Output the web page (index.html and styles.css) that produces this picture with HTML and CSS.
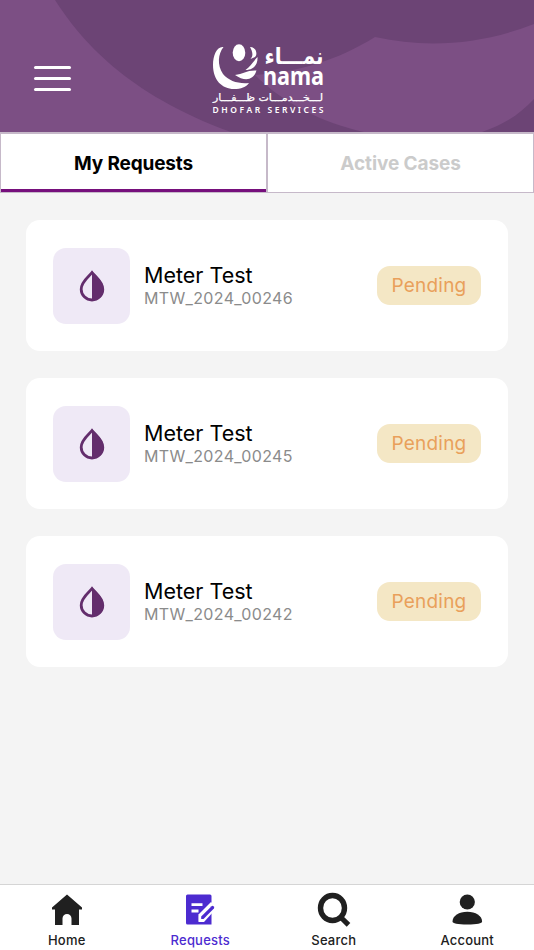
FILE: index.html
```html
<!DOCTYPE html>
<html lang="en">
<head>
<meta charset="utf-8">
<title>My Requests</title>
<link rel="stylesheet" href="styles.css">
</head>
<body>
<svg class="defs" width="0" height="0" aria-hidden="true">
  <symbol id="drop" viewBox="0 0 26 32">
    <path d="M13 2.500C10 6.500 2.200 11.500 2.200 19.200A10.800 10.800 0 0 0 23.800 19.200C23.800 11.500 16 6.500 13 2.500Z" fill="none" stroke="#632d6c" stroke-width="2.800"/>
    <path d="M13 1C17 6 24.500 11 24.500 19.200C24.500 26 19.500 30.500 13 30.500Z" fill="#632d6c"/>
  </symbol>
</svg>
<div class="app">
  <header class="header">
    <svg class="pattern" viewBox="0 0 534 132" preserveAspectRatio="none" aria-hidden="true">
      <path fill="#6c4475" d="M55 0C80 39 126 94 231 132H364C323 123 283 103 255 75C299 72 338 60 375 37C429 49 482 44 534 24V0ZM534 99C520 114 505 124 482 132H534Z"/>
    </svg>
    <button class="menu" aria-label="Menu"><span></span><span></span><span></span></button>
    <svg class="logo" viewBox="0 0 112 72" role="img" aria-label="nama Dhofar Services">
      <g fill="#fff">
        <path d="M11.500 5C5 4 1 13 1 23C1 38 10 47 22 47C29 47 34 45 37 41C26 42 17 39 11 32C5 23 6 12 11.500 5Z"/>
        <ellipse cx="27" cy="10.800" rx="6.300" ry="8.500"/>
        <path d="M38 5C44 5 46 12 43 15L38.500 17C42 13 40 9 38 5Z"/>
        <path d="M45.500 15C46 22 42 28 33.500 28C38 25 40 21 45.500 15Z"/>
        <path d="M44.500 28.500C42 38 33 40 23 33C31 32 35 28 44.500 28.500Z"/>
      </g>
      <g class="logo-text">
        <text class="logo-ar" x="52.500" y="22" direction="ltr" textLength="59" lengthAdjust="spacingAndGlyphs">نمـــاء</text>
        <text class="logo-name" x="51" y="43" textLength="61" lengthAdjust="spacingAndGlyphs">nama</text>
        <text class="logo-sub-ar" x="1" y="59" direction="ltr" textLength="110" lengthAdjust="spacingAndGlyphs">لـــخـــدمـــات ظـــفـــار</text>
        <text class="logo-sub" x="0.500" y="71" textLength="111" lengthAdjust="spacing">DHOFAR SERVICES</text>
      </g>
    </svg>
  </header>

  <nav class="tabs">
    <button class="tab active"><span>My Requests</span></button>
    <button class="tab"><span>Active Cases</span></button>
  </nav>

  <main class="list">
    <article class="card">
      <div class="tile"><svg><use href="#drop"/></svg></div>
      <div class="info"><h2>Meter Test</h2><p>MTW_2024_00246</p></div>
      <span class="status">Pending</span>
    </article>
    <article class="card">
      <div class="tile"><svg><use href="#drop"/></svg></div>
      <div class="info"><h2>Meter Test</h2><p>MTW_2024_00245</p></div>
      <span class="status">Pending</span>
    </article>
    <article class="card">
      <div class="tile"><svg><use href="#drop"/></svg></div>
      <div class="info"><h2>Meter Test</h2><p>MTW_2024_00242</p></div>
      <span class="status">Pending</span>
    </article>
  </main>

  <nav class="bottom">
    <a class="item">
      <svg viewBox="0 0 36 36"><path fill="#202020" d="M18 2.500L33 15.500V17.500H30V33H22.500V26.500A4.500 4.500 0 0 0 13.500 26.500V33H6V17.500H3V15.500Z"/></svg>
      <span>Home</span>
    </a>
    <a class="item current">
      <svg viewBox="0 0 36 36">
        <path fill="#4c2bd0" d="M5.500 2.500H28Q29.500 2.500 29.500 4V32.500H5.500Q4 32.500 4 31V4Q4 2.500 5.500 2.500Z"/>
        <path d="M9.500 12.700H20.500M9.500 19H16.500" stroke="#fff" stroke-width="2.800"/>
        <path d="M16.500 30V22.500L29 10L35 15.800L22 30Z" fill="#fff"/>
        <path fill-rule="evenodd" d="M16.800 29.300V23.600L28.800 11.600Q30 10.700 31.200 11.800L32.200 12.900Q33.200 14.200 32 15.400L21.500 29.300ZM19 26.800H20.800L29 17.200L27.200 15.600L19 24.600Z" fill="#fff"/>
        <path d="M19.200 27V24.600L29.600 14.200Q30.600 13.400 31.700 14.400Q32.700 15.500 31.900 16.500L21.500 27Z" fill="#4c2bd0"/>
      </svg>
      <span>Requests</span>
    </a>
    <a class="item">
      <svg viewBox="0 0 36 36"><ellipse cx="16.500" cy="16" rx="12" ry="12.500" fill="none" stroke="#202020" stroke-width="5.400"/><path d="M25.500 26L32.500 32.800" stroke="#202020" stroke-width="5.200"/></svg>
      <span>Search</span>
    </a>
    <a class="item">
      <svg viewBox="0 0 36 36"><circle cx="18.300" cy="10" r="7.600" fill="#202020"/><path fill="#202020" d="M3.500 29.500C3.500 24 10 19.800 18.300 19.800S33.100 24 33.100 29.500Q33.100 32.500 18.300 32.500T3.500 29.500Z"/></svg>
      <span>Account</span>
    </a>
  </nav>
</div>
</body>
</html>
```
FILE: styles.css
```css
* { box-sizing: border-box; }
body { margin: 0; background: #f4f4f4; font-family: Inter, "Liberation Sans", sans-serif; }
button { font: inherit; border: 0; padding: 0; background: none; }
h2, p { margin: 0; font-weight: 400; }
.defs { position: absolute; }
.app { height: 950px; display: flex; flex-direction: column; }

.header {
  position: relative;
  height: 132px;
  flex: none;
  display: grid;
  grid-template-columns: 212px 112px 1fr;
  align-items: start;
  background: #7c4f84;
}
.pattern { position: absolute; inset: 0; width: 100%; height: 100%; }
.menu {
  position: relative;
  display: flex;
  flex-direction: column;
  gap: 8px;
  width: 37px;
  margin: 66px 0 0 34px;
}
.menu span { height: 3px; border-radius: 2px; background: #fff; }
.logo { position: relative; width: 112px; height: 72px; margin-top: 42px; overflow: visible; }
.logo-text { fill: #fff; }
.logo-ar { font: 700 23px "DejaVu Sans", sans-serif; }
.logo-name { font: 700 25px "Noto Sans", sans-serif; }
.logo-sub-ar { font: 400 10px "DejaVu Sans", sans-serif; stroke: #fff; stroke-width: 0.250px; }
.logo-sub { font: 600 8.500px "Noto Sans", sans-serif; }

.tabs { display: grid; grid-template-columns: 1fr 1fr; height: 61px; flex: none; }
.tab {
  border: 1px solid #c6b9c9;
  border-top-width: 2px;
  background: #fff;
  color: #cbcbcb;
  font-size: 19px;
  font-weight: 700;
  letter-spacing: -0.100px;
}
.tab.active { position: relative; color: #000; letter-spacing: -0.150px; }
.tab.active::after {
  content: "";
  position: absolute;
  left: 0;
  right: 0;
  bottom: 0;
  height: 3px;
  background: #760f7c;
}

.list { flex: 1; display: flex; flex-direction: column; gap: 27px; padding: 27px 26px; }
.card {
  display: flex;
  align-items: center;
  height: 131px;
  padding: 0 27px;
  border-radius: 14px;
  background: #fff;
}
.tile {
  display: grid;
  place-items: center;
  width: 77px;
  height: 76px;
  border-radius: 13px;
  background: #efe9f6;
}
.tile svg { width: 26px; height: 32px; }
.info { flex: 1; margin-left: 14px; }
.info h2 { font-size: 21.500px; line-height: 26px; }
.info p { font-size: 16px; line-height: 21px; letter-spacing: 0.350px; color: #8b8b8b; }
.status {
  display: grid;
  place-items: center;
  width: 104px;
  height: 39px;
  border-radius: 13px;
  background: #f4e7c5;
  color: #e9a05b;
  font-size: 19px;
  letter-spacing: 0.200px;
}

.bottom {
  flex: none;
  display: grid;
  grid-template-columns: repeat(4, 1fr);
  height: 66px;
  border-top: 1px solid #d5d5d5;
  background: #fff;
}
.item {
  display: flex;
  flex-direction: column;
  align-items: center;
  padding-top: 7px;
  font-size: 13px;
  font-weight: 500;
  letter-spacing: 0.200px;
  color: #202020;
}
.item svg { width: 36px; height: 36px; }
.item span { margin-top: 4px; line-height: 16px; }
.item.current { color: #4c2bd0; }
```
